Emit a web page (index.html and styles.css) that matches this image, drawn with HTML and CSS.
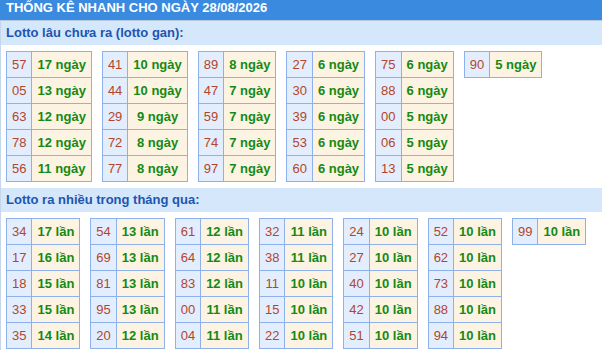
FILE: index.html
```html
<!DOCTYPE html>
<html lang="vi">
<head>
<meta charset="utf-8">
<title>Thống kê nhanh</title>
<link rel="stylesheet" href="styles.css">
</head>
<body>
<div class="box">
  <div class="title">THỐNG KÊ NHANH CHO NGÀY 28/08/2026</div>
  <div class="bar">Lotto lâu chưa ra (lotto gan):</div>
  <div class="grid">
    <table class="t"><tr><td class="n">57</td><td class="v">17 ngày</td></tr><tr><td class="n">05</td><td class="v">13 ngày</td></tr><tr><td class="n">63</td><td class="v">12 ngày</td></tr><tr><td class="n">78</td><td class="v">12 ngày</td></tr><tr><td class="n">56</td><td class="v">11 ngày</td></tr></table>
    <table class="t"><tr><td class="n">41</td><td class="v">10 ngày</td></tr><tr><td class="n">44</td><td class="v">10 ngày</td></tr><tr><td class="n">29</td><td class="v">9 ngày</td></tr><tr><td class="n">72</td><td class="v">8 ngày</td></tr><tr><td class="n">77</td><td class="v">8 ngày</td></tr></table>
    <table class="t"><tr><td class="n">89</td><td class="v">8 ngày</td></tr><tr><td class="n">47</td><td class="v">7 ngày</td></tr><tr><td class="n">59</td><td class="v">7 ngày</td></tr><tr><td class="n">74</td><td class="v">7 ngày</td></tr><tr><td class="n">97</td><td class="v">7 ngày</td></tr></table>
    <table class="t"><tr><td class="n">27</td><td class="v">6 ngày</td></tr><tr><td class="n">30</td><td class="v">6 ngày</td></tr><tr><td class="n">39</td><td class="v">6 ngày</td></tr><tr><td class="n">53</td><td class="v">6 ngày</td></tr><tr><td class="n">60</td><td class="v">6 ngày</td></tr></table>
    <table class="t"><tr><td class="n">75</td><td class="v">6 ngày</td></tr><tr><td class="n">88</td><td class="v">6 ngày</td></tr><tr><td class="n">00</td><td class="v">5 ngày</td></tr><tr><td class="n">06</td><td class="v">5 ngày</td></tr><tr><td class="n">13</td><td class="v">5 ngày</td></tr></table>
    <table class="t"><tr><td class="n">90</td><td class="v">5 ngày</td></tr></table>
  </div>
  <div class="bar">Lotto ra nhiều trong tháng qua:</div>
  <div class="grid">
    <table class="t"><tr><td class="n">34</td><td class="v">17 lần</td></tr><tr><td class="n">17</td><td class="v">16 lần</td></tr><tr><td class="n">18</td><td class="v">15 lần</td></tr><tr><td class="n">33</td><td class="v">15 lần</td></tr><tr><td class="n">35</td><td class="v">14 lần</td></tr></table>
    <table class="t"><tr><td class="n">54</td><td class="v">13 lần</td></tr><tr><td class="n">69</td><td class="v">13 lần</td></tr><tr><td class="n">81</td><td class="v">13 lần</td></tr><tr><td class="n">95</td><td class="v">13 lần</td></tr><tr><td class="n">20</td><td class="v">12 lần</td></tr></table>
    <table class="t"><tr><td class="n">61</td><td class="v">12 lần</td></tr><tr><td class="n">64</td><td class="v">12 lần</td></tr><tr><td class="n">83</td><td class="v">12 lần</td></tr><tr><td class="n">00</td><td class="v">11 lần</td></tr><tr><td class="n">04</td><td class="v">11 lần</td></tr></table>
    <table class="t"><tr><td class="n">32</td><td class="v">11 lần</td></tr><tr><td class="n">38</td><td class="v">11 lần</td></tr><tr><td class="n">11</td><td class="v">10 lần</td></tr><tr><td class="n">15</td><td class="v">10 lần</td></tr><tr><td class="n">22</td><td class="v">10 lần</td></tr></table>
    <table class="t"><tr><td class="n">24</td><td class="v">10 lần</td></tr><tr><td class="n">27</td><td class="v">10 lần</td></tr><tr><td class="n">40</td><td class="v">10 lần</td></tr><tr><td class="n">42</td><td class="v">10 lần</td></tr><tr><td class="n">51</td><td class="v">10 lần</td></tr></table>
    <table class="t"><tr><td class="n">52</td><td class="v">10 lần</td></tr><tr><td class="n">62</td><td class="v">10 lần</td></tr><tr><td class="n">73</td><td class="v">10 lần</td></tr><tr><td class="n">88</td><td class="v">10 lần</td></tr><tr><td class="n">94</td><td class="v">10 lần</td></tr></table>
    <table class="t"><tr><td class="n">99</td><td class="v">10 lần</td></tr></table>
  </div>
</div>
</body>
</html>
```
FILE: styles.css
```css
html, body {
  margin: 0;
  padding: 0;
  background: #ffffff;
}
body {
  font-family: "Liberation Sans", Arial, sans-serif;
  font-size: 13px;
}
.box {
  border-left: 1px solid #c5d6ea;
  min-height: 350px;
}
.title {
  background: #3a8bdf;
  color: #ffffff;
  font-weight: bold;
  line-height: 16px;
  height: 20px;
  border-bottom: 1px solid #b7c9dc;
  margin-left: -1px;
  padding-left: 6px;
  white-space: nowrap;
  overflow: hidden;
}
.bar {
  background: #d4e7fb;
  color: #1d55b0;
  font-weight: bold;
  line-height: 24px;
  height: 24px;
  padding-left: 5px;
}
.grid {
  display: flex;
  align-items: flex-start;
  gap: 10px;
  padding: 6px 0 6px 5px;
}
.t {
  border-collapse: collapse;
}
.t td {
  border: 1px solid #8eb1ec;
  height: 25px;
  padding: 0 5px;
  white-space: nowrap;
  text-align: center;
  font-size: 13px;
}
.n {
  background: #e2eefd;
  color: #b4452a;
}
.v {
  background: #fdf3e2;
  color: #148a14;
  font-weight: bold;
}
```
